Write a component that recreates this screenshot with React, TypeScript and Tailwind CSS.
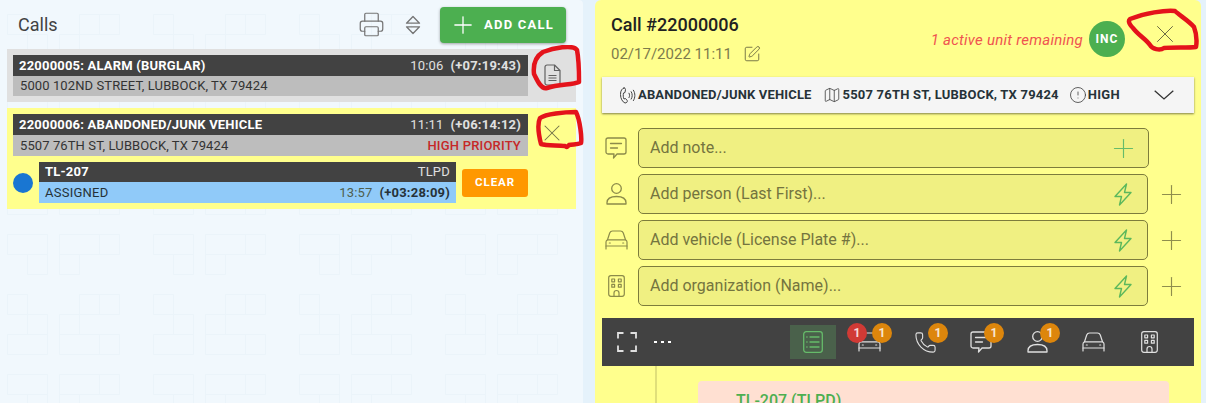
import React from "react";
import { Printer, Plus, X, SquarePen, Map, CircleAlert, Phone } from "lucide-react";

const Scribble = ({ className, d, w, h }: { className: string; d: string; w: number; h: number }) => (
  <svg className={`absolute ${className}`} width={w} height={h} viewBox={`0 0 ${w} ${h}`} fill="none">
    <path d={d} stroke="#e4131b" strokeWidth="4.5" strokeLinecap="round" strokeLinejoin="round" />
  </svg>
);

const Badge = ({ red, className }: { red?: boolean; className: string }) => (
  <span className={`absolute flex h-5 w-5 items-center justify-center rounded-full text-[12px] font-bold text-white/80 ${red ? "bg-[#d13a35]" : "bg-[#dd860c]"} ${className}`}>1</span>
);

const SortIcon = () => (
  <svg width="16" height="20" viewBox="0 0 16 20" fill="none" stroke="#757575" strokeWidth="1.3" strokeLinejoin="round">
    <path d="M1.5 8.2 8 1.5l6.5 6.7z" />
    <path d="M1.5 11.8 8 18.5l6.5-6.7z" />
  </svg>
);

const ListBox = () => (
  <svg width="20" height="22" viewBox="0 0 20 22" fill="none" stroke="#66bb6a" strokeWidth="1.3" strokeLinecap="round">
    <rect x="0.7" y="0.7" width="18.6" height="20.6" rx="2.5" />
    <path d="M7 6h9M7 11h9M7 16h9M3.8 6h.3M3.8 11h.3M3.8 16h.3" />
  </svg>
);

const Frame = () => (
  <svg width="20" height="20" viewBox="0 0 20 20" fill="none" stroke="#e0e0e0" strokeWidth="1.8">
    <path d="M1 6.5V1h5.5M13.5 1H19v5.5M19 13.5V19h-5.5M6.5 19H1v-5.5" />
  </svg>
);

const CarIcon = ({ color }: { color: string }) => (
  <svg width="23" height="20" viewBox="0 0 23 20" fill="none" stroke={color} strokeWidth="1.2" strokeLinecap="round" strokeLinejoin="round">
    <path d="M1 19v-7c0-1 .5-1.6 1.5-2.2L4.7 3C5.2 1.7 6 1 7.5 1h8c1.5 0 2.3.7 2.8 2l2.2 6.8c1 .6 1.5 1.2 1.5 2.2v7" />
    <path d="M2.5 9.8h18M1 16h21" />
    <path d="M4.3 13h1M17.7 13h1" />
  </svg>
);

const BuildingIcon = ({ color }: { color: string }) => (
  <svg width="17" height="22" viewBox="0 0 17 22" fill="none" stroke={color} strokeWidth="1.2" strokeLinejoin="round">
    <rect x="0.7" y="0.7" width="15.6" height="20.6" rx="2.2" />
    <rect x="3.8" y="4" width="2.8" height="2.8" />
    <rect x="10.4" y="4" width="2.8" height="2.8" />
    <rect x="3.8" y="9.4" width="2.8" height="2.8" />
    <rect x="10.4" y="9.4" width="2.8" height="2.8" />
    <path d="M6 21.3v-3.3a2.5 2.5 0 0 1 5 0v3.3" />
  </svg>
);

const PersonIcon = ({ color }: { color: string }) => (
  <svg width="21" height="22" viewBox="0 0 21 22" fill="none" stroke={color} strokeWidth="1.3">
    <circle cx="10.5" cy="5.5" r="4.8" />
    <path d="M1 21v-1.2C1 16 4.5 13.5 10.5 13.5S20 16 20 19.8V21z" strokeLinejoin="round" />
  </svg>
);

const NoteIcon = ({ color }: { color: string }) => (
  <svg width="22" height="22" viewBox="0 0 22 22" fill="none" stroke={color} strokeWidth="1.3" strokeLinejoin="round" strokeLinecap="round">
    <path d="M3 1h16a2 2 0 0 1 2 2v12a2 2 0 0 1-2 2h-7l-3.5 4L9 17H3a2 2 0 0 1-2-2V3a2 2 0 0 1 2-2z" />
    <path d="M5.5 6.5h11M5.5 11h7" />
  </svg>
);

const Bolt = () => (
  <svg width="18" height="23" viewBox="0 0 18 23" fill="none" stroke="#5cb85c" strokeWidth="1.4" strokeLinejoin="round">
    <path d="M12.5 1 1 13.5h6.5L5.5 22 17 9.5h-6.5z" />
  </svg>
);

const DocIcon = () => (
  <svg width="17" height="22" viewBox="0 0 17 22" fill="none" stroke="#616161" strokeWidth="1.2" strokeLinejoin="round">
    <path d="M3 1h7.5L16 6.5V19a2 2 0 0 1-2 2H3a2 2 0 0 1-2-2V3a2 2 0 0 1 2-2z" />
    <path d="M10.5 1v5.5H16" />
    <path d="M4.5 11.5h8M4.5 14h8M4.5 16.5h8" />
  </svg>
);

const RingPhone = () => (
  <svg width="17" height="17" viewBox="0 0 17 17" fill="none" stroke="#424242" strokeWidth="1" strokeLinecap="round" strokeLinejoin="round">
    <path d="M5 1C3 1.5 1.5 3.5 1.5 7.5S3.5 15 6 16c1.500 0 2.500-1 2.300-2.300L6.500 11.500 5 12c-.8-1.500-1-4-.5-6l1.500-.5.500-3C6.500 1.500 6 1 5 1z" />
    <path d="M10 6.200c.8 1.400.8 3 0 4.400M12.200 4.700c1.400 2.300 1.400 5.100 0 7.400M14.400 3.200c2 3.200 2 7.200 0 10.400" />
  </svg>
);

const CallRow = ({ left, right }: { left: string; right: React.ReactNode }) => (
  <div className="flex h-[21px] items-center justify-between bg-[#424242] pl-[6px] pr-[7px] text-white">
    <span className="text-[13px] font-bold tracking-[0.2px]">{left}</span>
    {right}
  </div>
);

const Time = ({ t, e }: { t: string; e: string }) => (
  <span className="flex gap-[7px] text-[13px] tracking-[0.2px] text-[#e0e0e0]">
    <span>{t}</span>
    <span className="font-bold">{e}</span>
  </span>
);

const Field = ({ icon, ph, action, extra }: { icon: React.ReactNode; ph: string; action: React.ReactNode; extra?: boolean }) => (
  <div className="flex h-10 items-center">
    <div className="flex w-[43px] shrink-0 items-center justify-center pr-[1px]">{icon}</div>
    <div className={`flex h-10 ${extra ? "w-[510px]" : "w-[511px]"} items-center justify-between rounded-[5px] border border-[#7d7c3c] bg-[#f0f082] pl-[11px] pr-[15px] text-[16px] text-[#74743f]`}>
      <span>{ph}</span>
      {action}
    </div>
    {extra && <Plus size={31} strokeWidth={0.9} className="ml-[8px] text-[#8f8e4d]" />}
  </div>
);

const TabIcon = ({ children, className = "" }: { children: React.ReactNode; className?: string }) => (
  <div className={`relative flex h-[34px] w-[46px] items-center justify-center ${className}`}>{children}</div>
);

export default function App() {
  return (
    <div className="relative flex h-[403px] w-[1206px] overflow-hidden bg-[#e5f2fb] font-['Roboto',sans-serif] text-[#212121]">
      <div className="h-full w-[583px] shrink-0 rounded-tr-[4px] bg-[#f1f8fd] bg-[url('data:image/svg+xml,%3Csvg%20xmlns=%27http://www.w3.org/2000/svg%27%20width=%27146%27%20height=%27140%27%20fill=%27none%27%20stroke=%27%23ebf4fa%27%3E%3Cpath%20d=%27M7.5%2014.5h20v20h-20zM27.5%2034.5h20v20h-20zM59.5%2034.5h20v20h-20zM79.5%2014.5h20v20h-20zM99.5%2014.5h20v20h-20zM7.5%2054.5h40v20h-40zM59.5%2054.5h40v20h-40zM99.5%2054.5h20v20h-20zM7.5%2094.5h40v20h-40zM59.5%2094.5h40v20h-40zM99.5%2094.5h20v20h-20zM27.5%20114.5h20v20h-20zM59.5%20114.5h20v20h-20z%27/%3E%3C/svg%3E')]">
        <div className="flex h-[49px] items-center justify-between pl-[18px] pr-[17px]">
          <h1 className="text-[18px] font-normal leading-none text-[#424242]">Calls</h1>
          <div className="flex items-center">
            <Printer size={27} strokeWidth={1.1} className="text-[#757575]" />
            <div className="ml-[20px] mr-[19px] flex"><SortIcon /></div>
            <button className="flex h-9 w-[126px] items-center justify-center gap-[7px] rounded-[4px] bg-[#4caf50] text-[13px] font-bold tracking-[1.2px] text-white shadow-[0_1px_3px_rgba(0,0,0,0.35)]">
              <Plus size={28} strokeWidth={1.1} className="ml-[-3px]" />
              ADD CALL
            </button>
          </div>
        </div>
        <div className="ml-[7px] flex h-[53px] w-[569px] gap-[6px] bg-[#e0e0e0] p-[6px] pr-0">
          <div className="w-[515px]">
            <CallRow left="22000005: ALARM (BURGLAR)" right={<Time t="10:06" e="(+07:19:43)" />} />
            <div className="flex h-[20px] items-center bg-[#bdbdbd] px-[7px] text-[13px] tracking-[0.1px] text-[#333]">5000 102ND STREET, LUBBOCK, TX 79424</div>
          </div>
          <div className="flex flex-1 items-center justify-center pb-[1px] pr-[5px]">
            <DocIcon />
          </div>
        </div>
        <div className="ml-[7px] mt-[6px] flex h-[101px] w-[569px] gap-[6px] bg-[#ffff8d] p-[6px] pr-0">
          <div className="w-[515px]">
            <CallRow left="22000006: ABANDONED/JUNK VEHICLE" right={<Time t="11:11" e="(+06:14:12)" />} />
            <div className="flex h-[21px] items-center justify-between bg-[#bdbdbd] px-[7px] text-[13px] tracking-[0.1px] text-[#333]">
              <span>5507 76TH ST, LUBBOCK, TX 79424</span>
              <span className="font-medium tracking-[0.2px] text-[#c62828]">HIGH PRIORITY</span>
            </div>
            <div className="mt-[6px] flex h-[41px] items-center">
              <div className="h-5 w-5 shrink-0 rounded-full bg-[#1976d2]" />
              <div className="ml-[6px] w-[417px]">
                <div className="flex h-5 items-center justify-between bg-[#424242] px-[6px] text-white">
                  <span className="text-[13px] font-bold tracking-[0.2px]">TL-207</span>
                  <span className="text-[13px] tracking-[0.2px] text-[#e0e0e0]">TLPD</span>
                </div>
                <div className="flex h-[21px] items-center justify-between bg-[#90caf9] px-[6px] text-[13px] tracking-[0.25px] text-[#263238]">
                  <span>ASSIGNED</span>
                  <span className="flex gap-[7px] tracking-[0.2px]"><span className="text-[#4e5f4e]">13:57</span><span className="font-bold">(+03:28:09)</span></span>
                </div>
              </div>
              <button className="ml-[6px] h-7 w-[66px] rounded-[3px] bg-[#ff9800] text-[11.5px] font-bold tracking-[0.9px] text-white">CLEAR</button>
            </div>
          </div>
          <div className="flex flex-1 justify-center pr-[6px] pt-[5px]">
            <X size={28} strokeWidth={0.9} className="text-[#73734a]" />
          </div>
        </div>
      </div>

      <div className="ml-[12px] flex h-full w-[606px] shrink-0 flex-col rounded-t-[6px] bg-[#ffff8d]">
        <div className="flex h-[77px] justify-between pl-[16px]">
          <div>
            <div className="pt-[14px] text-[18px] font-medium leading-[22px] text-[#212121]">Call #22000006</div>
            <div className="mt-[7px] flex items-center gap-[11px] text-[15px] text-[#7d7b4c]">
              <span>02/17/2022 11:11</span>
              <SquarePen size={18} strokeWidth={1.1} className="text-[#5f5e3a]" />
            </div>
          </div>
          <div className="flex items-start pr-[26px] pt-[21px]">
            <span className="pt-[8px] text-[15px] italic tracking-[0.25px] text-[#ef5350]">1 active unit remaining</span>
            <span className="ml-[6px] mr-[25px] flex h-9 w-9 items-center justify-center rounded-full bg-[#4caf50] text-[12px] font-bold tracking-[1px] text-white">INC</span>
            <X size={30} strokeWidth={0.8} className="mr-[-5px] mt-[-2px] text-[#6d6c44]" />
          </div>
        </div>
        <div className="mx-[7px] flex h-9 w-[592px] items-center bg-[#f5f5f5] pl-[17px] pr-[20px] text-[13px] font-bold tracking-[0.15px] text-[#263238] shadow-[0_1px_2px_rgba(0,0,0,0.5)]">
          <span className="mr-[2px]"><RingPhone /></span>
          <span>ABANDONED/JUNK VEHICLE</span>
          <Map size={18} strokeWidth={1.1} className="ml-[11px] mr-[2px] text-[#424242]" />
          <span className="tracking-[0.2px]">5507 76TH ST, LUBBOCK, TX 79424</span>
          <CircleAlert size={18} strokeWidth={1.1} className="ml-[10px] mr-[1px] text-[#424242]" />
          <span className="tracking-[0.3px]">HIGH</span>
          <svg className="ml-auto" width="20" height="10" viewBox="0 0 20 10" fill="none" stroke="#333" strokeWidth="1.3"><path d="M.7.7 10 9l9.3-8.300" /></svg>
        </div>
        <div className="mt-[15px] flex flex-col gap-[6px] pr-[8px]">
          <Field icon={<NoteIcon color="#8c8b4a" />} ph="Add note..." action={<Plus size={31} strokeWidth={0.9} className="mr-[-6px] text-[#66bb6a]" />} />
          <Field extra icon={<PersonIcon color="#8c8b4a" />} ph="Add person (Last First)..." action={<Bolt />} />
          <Field extra icon={<CarIcon color="#8c8b4a" />} ph="Add vehicle (License Plate #)..." action={<Bolt />} />
          <Field extra icon={<BuildingIcon color="#8c8b4a" />} ph="Add organization (Name)..." action={<Bolt />} />
        </div>
        <div className="mx-[7px] mt-[12px] flex h-12 w-[592px] shrink-0 items-center bg-[#424242] pl-[15px]">
          <Frame />
          <span className="ml-[17px] flex gap-[4px]">
            <i className="h-[2px] w-[3px] bg-white" /><i className="h-[2px] w-[3px] bg-white" /><i className="h-[2px] w-[3px] bg-white" />
          </span>
          <div className="ml-[119px] flex items-center gap-[10px]">
            <TabIcon className="bg-[#4a614b]"><ListBox /></TabIcon>
            <TabIcon><CarIcon color="#e0e0e0" /><Badge red className="left-[1px] top-[-2px]" /><Badge className="left-[26px] top-[-2px]" /></TabIcon>
            <TabIcon><Phone size={23} strokeWidth={1.15} className="text-[#e0e0e0]" /><Badge className="left-[26px] top-[-2px]" /></TabIcon>
            <TabIcon><NoteIcon color="#e0e0e0" /><Badge className="left-[26px] top-[-2px]" /></TabIcon>
            <TabIcon><PersonIcon color="#e0e0e0" /><Badge className="left-[26px] top-[-2px]" /></TabIcon>
            <TabIcon><CarIcon color="#e0e0e0" /></TabIcon>
            <TabIcon><BuildingIcon color="#e0e0e0" /></TabIcon>
          </div>
        </div>
        <div className="relative flex-1">
          <div className="absolute bottom-0 left-[60px] top-0 w-[2px] bg-[#e0df7a]" />
          <div className="absolute left-[103px] top-[15px] h-[40px] w-[471px] rounded-t-[4px] bg-[#ffe0d2] pl-[38px] pt-[10px] text-[16px] font-medium leading-[19px] text-[#4caf50]">TL-207 (TLPD)</div>
        </div>
      </div>

      <Scribble className="left-[527px] top-[45px]" w={56} h={52} d="M16 7C26 3 46 -1 50 5c2 10 2 24 2 32-6 3-20 2-32 6-6 2-10-8-13-14C6 20 8 12 16 7z" />
      <Scribble className="left-[534px] top-[108px]" w={52} h={46} d="M6 10C12 6 30 4 42 4c4 8 6 26 5 31-4 2-8 1-12 2-2 2-2 3-4 1-8-1-18 0-24-2C5 28 3 16 6 10z" />
      <Scribble className="left-[1125px] top-[8px]" w={78} h={50} d="M5 11C20 5 40 2 50 3c4 4 14 10 19 16 3 8 3 14 2 20-8 1-22 0-32 1-4 3-12 1-14-3C22 32 12 26 8 20 4 16 3 13 5 11z" />
    </div>
  );
}
